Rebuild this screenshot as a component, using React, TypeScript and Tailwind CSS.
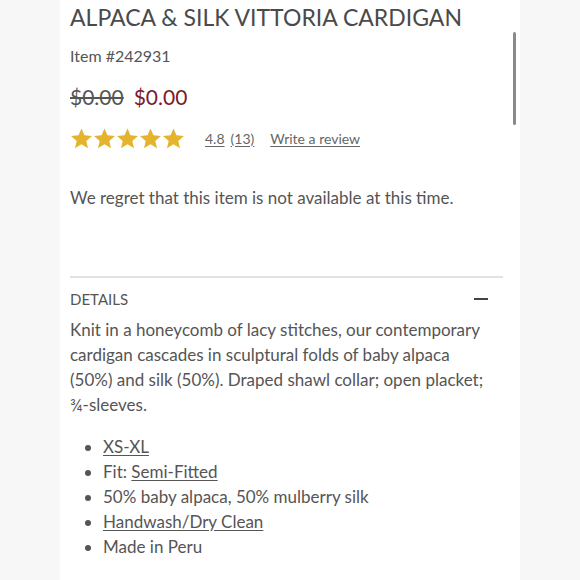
import React from "react";

const Star = () => (
  <svg width="23" height="23" viewBox="0 0 24 24" className="shrink-0">
    <path
      d="M12 1.5l3.1 7.2 7.8.7-5.9 5.1 1.8 7.6L12 18.1l-6.8 4 1.8-7.6-5.9-5.1 7.8-.7z"
      fill="#e4b42e"
    />
  </svg>
);

export default function App() {
  return (
    <div
      className="relative w-[580px] h-[580px] overflow-hidden bg-[#f7f7f7] text-[#555]"
      style={{ fontFamily: "Lato, 'Open Sans', sans-serif" }}
    >
      <div className="ml-[60px] w-[460px] h-full bg-white pl-[10px] pr-[17px]">
        <h1 className="pt-[2px] text-[23px] leading-[30px] font-normal text-[#4a4a4a]">
          ALPACA &amp; SILK VITTORIA CARDIGAN
        </h1>
        <div className="mt-[12px] text-[16px] leading-[24px] text-[#555]">Item #242931</div>
        <div className="mt-[16px] flex items-center gap-[10px] text-[21px] leading-[26px]">
          <span className="line-through text-[#555]">$0.00</span>
          <span className="text-[#7b1a2c]">$0.00</span>
        </div>
        <div className="mt-[17px] flex items-center text-[14px] leading-[20px] text-[#666]">
          <div className="flex">
            <Star />
            <Star />
            <Star />
            <Star />
            <Star />
          </div>
          <span className="ml-[20px] underline underline-offset-2">4.8</span>
          <span className="ml-[6px] underline underline-offset-2">(13)</span>
          <span className="ml-[16px] underline underline-offset-2">Write a review</span>
        </div>
        <p className="mt-[36px] text-[17px] leading-[24px] text-[#555]">
          We regret that this item is not available at this time.
        </p>
        <div className="mt-[66px] h-[2px] bg-[#e2e2e2]" />
        <div className="mt-[11px] flex items-center justify-between">
          <span className="text-[15px] leading-[20px] text-[#555]">DETAILS</span>
          <span className="mr-[15px] block w-[14px] h-[2px] bg-[#444]" />
        </div>
        <p className="mt-[8px] text-[17px] leading-[25px] text-[#555] whitespace-nowrap">
          Knit in a honeycomb of lacy stitches, our contemporary
          <br />
          cardigan cascades in sculptural folds of baby alpaca
          <br />
          (50%) and silk (50%). Draped shawl collar; open placket;
          <br />
          ¾-sleeves.
        </p>
        <ul className="mt-[17px] pl-[33px] list-disc text-[17px] leading-[25px] text-[#555] marker:text-[#555]">
          <li>
            <span className="underline underline-offset-2">XS-XL</span>
          </li>
          <li>
            Fit: <span className="underline underline-offset-2">Semi-Fitted</span>
          </li>
          <li>50% baby alpaca, 50% mulberry silk</li>
          <li>
            <span className="underline underline-offset-2">Handwash/Dry Clean</span>
          </li>
          <li>Made in Peru</li>
        </ul>
      </div>
      <div className="absolute left-[513px] top-[32px] w-[3px] h-[93px] rounded-full bg-[#8a8a8a]" />
    </div>
  );
}
